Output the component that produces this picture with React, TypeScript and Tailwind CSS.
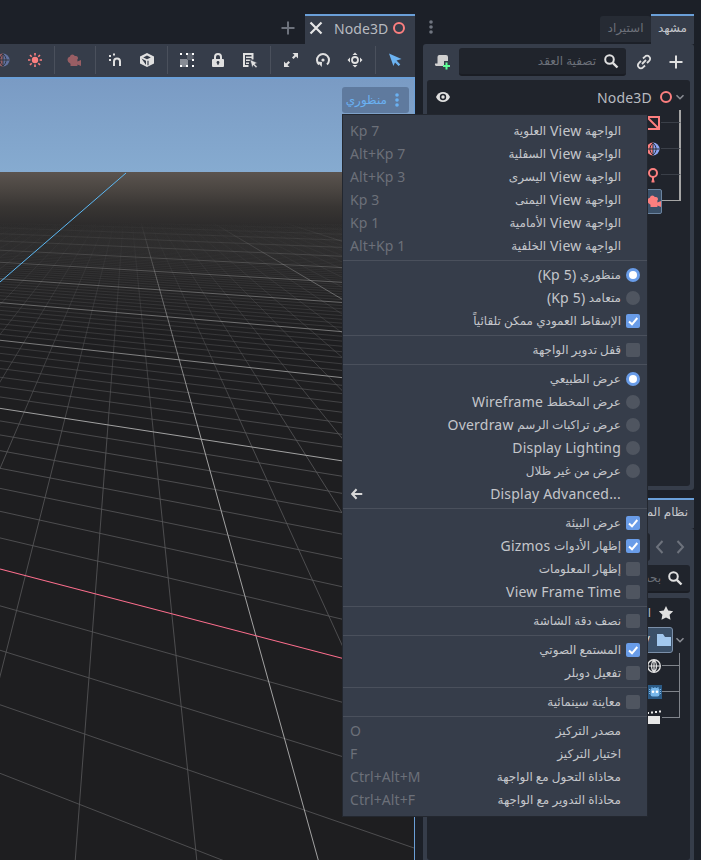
import React from "react";

const FONT = "font-['Noto_Sans','DejaVu_Sans',sans-serif]";

/* ---------- 3D viewport drawing ---------- */
const VPX = 127, HY = 172;
const lines: { x1: number; y1: number; x2: number; y2: number; major: boolean }[] = [];
for (let k = -40; k <= 70; k++) {
  if (k === -8) continue;
  const s = 0.278 + 0.1766 * k;
  lines.push({ x1: VPX, y1: HY, x2: VPX + s * 688, y2: 860, major: k % 8 === 0 });
}
for (let j = 5; j >= -150; j--) {
  if (j === 0) continue;
  const h = 1 / (0.002519 - 0.000214 * j);
  const f = 2040 / 1540;
  lines.push({ x1: -1540, y1: HY, x2: 500, y2: HY + h * f, major: j % 8 === 0 });
}

function Scene() {
  return (
    <svg viewBox="0 79 414 781" className="block h-full w-full">
      <defs>
        <linearGradient id="sky" x1="0" y1="0" x2="0" y2="1">
          <stop offset="0" stopColor="#7a9bc4" />
          <stop offset="1" stopColor="#86abd0" />
        </linearGradient>
        <linearGradient id="ground" gradientUnits="userSpaceOnUse" x1="0" y1="172" x2="0" y2="340">
          <stop offset="0" stopColor="#5b544f" />
          <stop offset="0.107" stopColor="#4a4541" />
          <stop offset="0.21" stopColor="#383533" />
          <stop offset="0.32" stopColor="#2c2b2b" />
          <stop offset="1" stopColor="#1e1e20" />
        </linearGradient>
        <linearGradient id="minor" gradientUnits="userSpaceOnUse" x1="0" y1="222" x2="0" y2="450">
          <stop offset="0" stopColor="#58585a" stopOpacity="0" />
          <stop offset="0.3" stopColor="#58585a" stopOpacity="0.3" />
          <stop offset="1" stopColor="#58585a" stopOpacity="0.8" />
        </linearGradient>
        <linearGradient id="major" gradientUnits="userSpaceOnUse" x1="0" y1="222" x2="0" y2="420">
          <stop offset="0" stopColor="#a8a8a8" stopOpacity="0" />
          <stop offset="0.3" stopColor="#a8a8a8" stopOpacity="0.45" />
          <stop offset="1" stopColor="#a8a8a8" stopOpacity="0.95" />
        </linearGradient>
      </defs>
      <rect x="0" y="79" width="414" height="93" fill="url(#sky)" />
      <rect x="0" y="172" width="414" height="688" fill="url(#ground)" />
      {lines.filter((l) => !l.major).map((l, i) => (
        <line key={i} x1={l.x1} y1={l.y1} x2={l.x2} y2={l.y2} stroke="url(#minor)" strokeWidth="1" />
      ))}
      {lines.filter((l) => l.major).map((l, i) => (
        <line key={i} x1={l.x1} y1={l.y1} x2={l.x2} y2={l.y2} stroke="url(#major)" strokeWidth="1" />
      ))}
      <line x1="126" y1="173" x2="0" y2="282" stroke="#5cb9f5" strokeWidth="1" />
      <line x1="0" y1="569" x2="414" y2="677" stroke="#ff6f8e" strokeWidth="1.1" />
    </svg>
  );
}

/* ---------- icons ---------- */
const I = ({ children, className = "", size = 16 }: { children: React.ReactNode; className?: string; size?: number }) => (
  <svg viewBox="0 0 16 16" width={size} height={size} className={"block shrink-0 " + className}>{children}</svg>
);
const Globe = ({ a = "#fc7f7f", b = "#8da5f3", dim = false }: { a?: string; b?: string; dim?: boolean }) => (
  <I className={dim ? "opacity-50" : ""}>
    <path d="M8 1.5a6.500 6.500 0 0 0 0 13z" fill={a} />
    <path d="M8 1.5a6.500 6.500 0 0 1 0 13z" fill={b} />
    <path d="M8 2v12M2 8h12M8 2c-4 3-4 9 0 12M8 2c4 3 4 9 0 12" fill="none" stroke="#2b303a" strokeWidth="1" />
  </I>
);
const Sun = () => (
  <I>
    <circle cx="8" cy="8" r="3.2" fill="#fc7f7f" />
    <path d="M8 1v2.4M8 12.600V15M1 8h2.4M12.600 8H15M3 3l1.7 1.7M11.300 11.300 13 13M13 3l-1.7 1.7M4.700 11.300 3 13" stroke="#fc7f7f" strokeWidth="1.6" />
  </I>
);
const Camera = ({ c = "#fc7f7f", dim = false }: { c?: string; dim?: boolean }) => (
  <I className={dim ? "opacity-50" : ""}>
    <path d="M6.500 2.500a2.500 2.500 0 0 1 2.300 1.600 2.300 2.300 0 0 1 3.200 2.100c0 .8-.4 1.400-1 1.800h.4v1.500L15 8v6l-3.600-1.500V14H4.500v-2.200A4.500 4.500 0 0 1 1.500 8c0-1.600 1-3 2.400-3.200a2.700 2.700 0 0 1 2.600-2.300z" fill={c} />
  </I>
);
const Magnet = () => (
  <I>
    <path d="M6 14V9.500a3 3 0 0 1 6 0V14" fill="none" stroke="#e0e0e0" strokeWidth="2" />
    <rect x="1" y="3" width="2" height="2" fill="#e0e0e0" />
    <rect x="5" y="1.500" width="2" height="2" fill="#e0e0e0" />
    <rect x="1" y="7" width="2" height="2" fill="#e0e0e0" />
  </I>
);
const Cube = () => (
  <I>
    <path d="M8 1 15 4.500v7L8 15 1 11.500v-7z" fill="#e0e0e0" />
    <path d="M8 3.500 11.800 5.400 8 7.300 4.200 5.400z M2.500 6.500 7 8.700v4.200" fill="#363d4a" />
    <path d="M9 8.700v4.600" stroke="#363d4a" strokeWidth="1.2" />
  </I>
);
const GroupIcon = () => (
  <I>
    <rect x="1" y="7" width="8" height="8" fill="#878c95" />
    <rect x="8" y="1" width="6.500" height="7" fill="#5c626d" />
    <rect x="1" y="1" width="2" height="2" fill="#fff" />
    <rect x="7" y="1" width="2" height="2" fill="#fff" />
    <rect x="13" y="1" width="2" height="2" fill="#fff" />
    <rect x="1" y="13" width="2" height="2" fill="#fff" />
    <rect x="7" y="13" width="2" height="2" fill="#fff" />
    <rect x="13" y="13" width="2" height="2" fill="#fff" />
    <rect x="13" y="7" width="2" height="2" fill="#fff" />
  </I>
);
const Lock = () => (
  <I>
    <path d="M5 7V5a3 3 0 0 1 6 0v2" fill="none" stroke="#e0e0e0" strokeWidth="2" />
    <path d="M3 7h10a1 1 0 0 1 1 1v6a1 1 0 0 1-1 1H3a1 1 0 0 1-1-1V8a1 1 0 0 1 1-1z" fill="#e0e0e0" />
    <circle cx="8" cy="10.500" r="1.400" fill="#363d4a" />
    <rect x="7.400" y="10.500" width="1.200" height="2.400" fill="#363d4a" />
  </I>
);
const ListCursor = () => (
  <I>
    <path d="M1 1h10.500v6.500H9.500V3H3v10h3.500v2H1z" fill="#e0e0e0" />
    <path d="M4 4.500h6.500v1.600H4zM4 7.500h4.500v1.600H4zM4 10.500h3v1.600H4z" fill="#e0e0e0" />
    <path d="M8 7.500 15.500 11l-2.700 1.100 2.500 2.600-1.300 1.200-2.500-2.600-1.200 2.500z" fill="#e0e0e0" stroke="#363d4a" strokeWidth="0.6" />
  </I>
);
const Expand = () => (
  <I>
    <path d="M9.500 1H15v5.500l-2-2L10.500 7 9 5.500 11.500 3zM6.500 15H1V9.500l2 2L5.500 9 7 10.500 4.500 13z" fill="#e0e0e0" />
  </I>
);
const Rotate = () => (
  <I>
    <path d="M4 12.500A6 6 0 1 1 12 12.500" fill="none" stroke="#e0e0e0" strokeWidth="2" />
    <path d="M1.800 9.500 7 10l-.2 5z" fill="#e0e0e0" />
    <circle cx="8" cy="8" r="1.600" fill="#e0e0e0" />
  </I>
);
const Move = () => (
  <I>
    <path d="M8 .5 10.500 3h-5zM8 15.500 5.500 13h5zM.5 8 3 5.500v5zM15.500 8 13 10.500v-5z" fill="#e0e0e0" />
    <circle cx="8" cy="8" r="3" fill="none" stroke="#e0e0e0" strokeWidth="1.800" />
  </I>
);
const Pointer = () => (
  <I>
    <path d="M2 1.500 14.500 7l-5 1.600 3.800 3.800-1.700 1.700-3.600-3.700L6.400 14z" fill="#6cb3f2" />
  </I>
);
const Plus = ({ c = "#e0e0e0" }: { c?: string }) => (
  <I>
    <path d="M8 1.500v13M1.500 8h13" stroke={c} strokeWidth="2" />
  </I>
);
const Close = () => (
  <I>
    <path d="M2.500 2.500l11 11M13.500 2.500l-11 11" stroke="#e6e6e6" strokeWidth="2.200" />
  </I>
);
const Ring = () => (
  <I>
    <circle cx="8" cy="8" r="5" fill="none" stroke="#fc7f7f" strokeWidth="2" />
  </I>
);
const Dots = ({ c = "#707580" }: { c?: string }) => (
  <I>
    <circle cx="8" cy="3" r="1.800" fill={c} />
    <circle cx="8" cy="8" r="1.800" fill={c} />
    <circle cx="8" cy="13" r="1.800" fill={c} />
  </I>
);
const Search = () => (
  <I>
    <circle cx="6.500" cy="6.500" r="4.300" fill="none" stroke="#e0e0e0" strokeWidth="2" />
    <path d="M9.800 9.800 14.500 14.500" stroke="#e0e0e0" strokeWidth="2.400" />
  </I>
);
const LinkIcon = () => (
  <I>
    <path d="M7 4.500 9 2.600a2.800 2.800 0 0 1 4.200 0 2.800 2.800 0 0 1 0 4.200L11 9M9 11.500 7 13.400a2.800 2.800 0 0 1-4.200 0 2.800 2.800 0 0 1 0-4.200L5 7M6 10l4-4" fill="none" stroke="#e0e0e0" strokeWidth="1.800" />
  </I>
);
const ScriptAdd = () => (
  <I>
    <path d="M5 1h7a2 2 0 0 1 2 2v4H10v5H2a2 2 0 0 1-1-2.500h2.500V3A2 2 0 0 1 5 1z" fill="#d0d0d0" />
    <path d="M12.500 8.500v7M9 12h7" stroke="#5fff97" strokeWidth="2" />
  </I>
);
const Eye = () => (
  <I>
    <path d="M1 8c1.500-3.200 4-5 7-5s5.500 1.800 7 5c-1.500 3.200-4 5-7 5s-5.500-1.800-7-5z" fill="#e0e0e0" />
    <circle cx="8" cy="8" r="3.200" fill="#20242c" />
    <circle cx="8" cy="8" r="1.700" fill="#e0e0e0" />
  </I>
);
const Chevron = () => (
  <svg viewBox="0 0 10 10" width="10" height="10" className="block shrink-0">
    <path d="M1.500 3.200 5 6.700l3.500-3.500" fill="none" stroke="#8a8d94" strokeWidth="1.600" />
  </svg>
);
const Collision = () => (
  <I>
    <rect x="2" y="2" width="12" height="12" fill="none" stroke="#fc7f7f" strokeWidth="2" />
    <path d="M2 2l12 12" stroke="#fc7f7f" strokeWidth="2" />
  </I>
);
const Pin = () => (
  <I>
    <circle cx="8" cy="6" r="4" fill="none" stroke="#fc7f7f" strokeWidth="2" />
    <path d="M8 10v4M6.500 14.500h3" stroke="#fc7f7f" strokeWidth="2" />
  </I>
);
const Star = () => (
  <I>
    <path d="M8 1l2.200 4.600 5 .7-3.600 3.500.9 5L8 12.400l-4.500 2.400.9-5L.8 6.300l5-.7z" fill="#e0e0e0" />
  </I>
);
const Folder = () => (
  <I>
    <path d="M1 2h6l2 3h6v9H1z" fill="#a2c8ee" />
  </I>
);
const WhiteGlobe = () => (
  <I>
    <circle cx="8" cy="8" r="6.300" fill="none" stroke="#e0e0e0" strokeWidth="1.400" />
    <path d="M8 2v12M2 8h12M8 2c-3.500 3-3.500 9 0 12M8 2c3.500 3 3.500 9 0 12" fill="none" stroke="#e0e0e0" strokeWidth="1.200" />
  </I>
);
const GodotIcon = () => (
  <svg viewBox="0 0 14 14" width="14" height="14" className="block shrink-0">
    <rect width="14" height="14" fill="#2b5a85" />
    <rect x="2.500" y="3" width="9" height="8.500" rx="2" fill="#78b8ec" />
    <circle cx="5" cy="6.800" r="1.300" fill="#fff" />
    <circle cx="9" cy="6.800" r="1.300" fill="#fff" />
    <path d="M1.500 4v6M12.500 4v6M4 2v1M7 2v1M10 2v1" stroke="#78b8ec" strokeDasharray="1 1" />
  </svg>
);
const Clapper = () => (
  <I>
    <rect x="1" y="6" width="13" height="8" fill="#e6e6e6" />
    <path d="M1 3h2M5 2.500h2M9 2h2M13 1.500h2" stroke="#e6e6e6" strokeWidth="2" />
  </I>
);
const ChevSide = ({ dir }: { dir: "l" | "r" }) => (
  <I>
    <path d={dir === "l" ? "M10.500 2 5 8l5.500 6" : "M5.500 2 11 8l-5.500 6"} fill="none" stroke="#6d727c" strokeWidth="2" />
  </I>
);
const BackArrow = () => (
  <I size={14}>
    <path d="M7.500 2.500 2.500 8l5 5.500M3 8h11" fill="none" stroke="#d8d8d8" strokeWidth="2.400" />
  </I>
);

/* ---------- text: Arabic runs are set smaller, as their fallback face is wide ---------- */
const AR = /([\u0600-\u06FF]+(?:\s+[\u0600-\u06FF]+)*)/;
function Mixed({ text }: { text: string }) {
  const parts = text.split(AR).filter(Boolean);
  return (
    <span dir={AR.test(text) ? "rtl" : "ltr"} className="whitespace-nowrap">
      {parts.map((p, i) =>
        AR.test(p) ? (
          <span key={i} className="relative top-[-1px] text-[12px]">{p}</span>
        ) : (
          <span key={i} className="text-[14px] tracking-[0.2px]">{p}</span>
        )
      )}
    </span>
  );
}

/* ---------- menu ---------- */
type Row =
  | { t: "sep" }
  | { t: "item"; label: string; short?: string; mark?: "on" | "off" | "ron" | "roff" | "sub" };

const rows: Row[] = [
  { t: "item", label: "الواجهة View العلوية", short: "Kp 7" },
  { t: "item", label: "الواجهة View السفلية", short: "Alt+Kp 7" },
  { t: "item", label: "الواجهة View اليسرى", short: "Alt+Kp 3" },
  { t: "item", label: "الواجهة View اليمنى", short: "Kp 3" },
  { t: "item", label: "الواجهة View الأمامية", short: "Kp 1" },
  { t: "item", label: "الواجهة View الخلفية", short: "Alt+Kp 1" },
  { t: "sep" },
  { t: "item", label: "منظوري (Kp 5)", mark: "ron" },
  { t: "item", label: "متعامد (Kp 5)", mark: "roff" },
  { t: "item", label: "الإسقاط العمودي ممكن تلقائياً", mark: "on" },
  { t: "sep" },
  { t: "item", label: "قفل تدوير الواجهة", mark: "off" },
  { t: "sep" },
  { t: "item", label: "عرض الطبيعي", mark: "ron" },
  { t: "item", label: "عرض المخطط Wireframe", mark: "roff" },
  { t: "item", label: "عرض تراكبات الرسم Overdraw", mark: "roff" },
  { t: "item", label: "Display Lighting", mark: "roff" },
  { t: "item", label: "عرض من غير ظلال", mark: "roff" },
  { t: "item", label: "Display Advanced...", mark: "sub" },
  { t: "sep" },
  { t: "item", label: "عرض البيئة", mark: "on" },
  { t: "item", label: "إظهار الأدوات Gizmos", mark: "on" },
  { t: "item", label: "إظهار المعلومات", mark: "off" },
  { t: "item", label: "View Frame Time", mark: "off" },
  { t: "sep" },
  { t: "item", label: "نصف دقة الشاشة", mark: "off" },
  { t: "sep" },
  { t: "item", label: "المستمع الصوتي", mark: "on" },
  { t: "item", label: "تفعيل دوبلر", mark: "off" },
  { t: "sep" },
  { t: "item", label: "معاينة سينمائية", mark: "off" },
  { t: "sep" },
  { t: "item", label: "مصدر التركيز", short: "O" },
  { t: "item", label: "اختيار التركيز", short: "F" },
  { t: "item", label: "محاذاة التحول مع الواجهة", short: "Ctrl+Alt+M" },
  { t: "item", label: "محاذاة التدوير مع الواجهة", short: "Ctrl+Alt+F" },
];

function Mark({ m }: { m?: string }) {
  if (m === "on")
    return (
      <div className="flex h-[14px] w-[14px] items-center justify-center rounded-[2px] bg-[#699ce8]">
        <svg viewBox="0 0 12 12" width="12" height="12"><path d="M2 6.500 5 9.300 10.300 3" fill="none" stroke="#fff" strokeWidth="2" /></svg>
      </div>
    );
  if (m === "off") return <div className="h-[14px] w-[14px] rounded-[2px] bg-[#4f5560]" />;
  if (m === "ron")
    return (
      <div className="flex h-[14px] w-[14px] items-center justify-center rounded-full bg-[#699ce8]">
        <div className="h-[8px] w-[8px] rounded-full bg-white" />
      </div>
    );
  if (m === "roff") return <div className="h-[14px] w-[14px] rounded-full bg-[#4f5560]" />;
  return null;
}

function Menu() {
  return (
    <div className="absolute left-[342px] top-[114px] w-[306px] border border-[#23272f] bg-[#363d4a] py-[4.500px]">
      {rows.map((r, i) =>
        r.t === "sep" ? (
          <div key={i} className="flex h-[6px] items-center"><div className="h-px w-full bg-[#4a505c]" /></div>
        ) : (
          <div key={i} className="flex h-[23px] items-center pl-[7px] pr-[7px]">
            {r.mark === "sub" ? <BackArrow /> : r.short ? <span className="mb-[2px] text-[14px] tracking-[0.1px] text-[#6c7079]">{r.short}</span> : null}
            <div className="mb-[2px] ml-auto mr-[5px] text-[#c4c6ca]"><Mixed text={r.label} /></div>
            <div className="flex w-[14px] justify-center">
              <Mark m={r.mark} />
            </div>
          </div>
        )
      )}
    </div>
  );
}

/* ---------- layout pieces ---------- */
const Btn = ({ children, className = "w-8" }: { children: React.ReactNode; className?: string }) => (
  <div className={"flex h-full shrink-0 items-center justify-center " + className}>{children}</div>
);
const Sep = ({ className }: { className: string }) => (
  <div className={"flex h-full shrink-0 items-center justify-center " + className}>
    <div className="h-[28px] w-px bg-[#4a505c]" />
  </div>
);

function Toolbar() {
  return (
    <div className="flex h-[34px] justify-end overflow-hidden bg-[#363d4a] pb-[2px] pr-[4px]">
      <Btn><Globe dim /></Btn>
      <Btn><Sun /></Btn>
      <Sep className="w-[7px]" />
      <Btn><Camera dim /></Btn>
      <Sep className="w-[10px]" />
      <Btn className="w-[31px]"><Magnet /></Btn>
      <Btn><Cube /></Btn>
      <Sep className="w-[8px]" />
      <Btn className="w-[31px]"><GroupIcon /></Btn>
      <Btn className="w-[32px]"><Lock /></Btn>
      <Btn><ListCursor /></Btn>
      <Sep className="w-[9px]" />
      <Btn><Expand /></Btn>
      <Btn><Rotate /></Btn>
      <Btn><Move /></Btn>
      <Sep className="w-[8px]" />
      <Btn><Pointer /></Btn>
    </div>
  );
}

function Branch({ last, bright, w }: { last?: boolean; bright?: boolean; w: string }) {
  return (
    <div className={"flex h-full flex-col " + w}>
      <div className={"h-1/2 border-b border-r-2 border-r-[#a5a5a5] " + (bright ? "border-b-[#a5a5a5]" : "border-b-[#3a3f48]")} />
      <div className={"h-1/2 border-r-2 " + (last ? "border-r-transparent" : "border-r-[#a5a5a5]")} />
    </div>
  );
}
function Branch2({ last }: { last?: boolean }) {
  return (
    <div className="flex h-full w-[18px] flex-col">
      <div className="h-1/2 border-b border-r border-[#80848b]" />
      <div className={"h-1/2 border-r " + (last ? "border-transparent" : "border-[#80848b]")} />
    </div>
  );
}

function SceneDock() {
  return (
    <div className="flex h-[446px] flex-col rounded-[3px] bg-[#363d4a] p-[4px] pt-0">
      <div className="flex h-[36px] items-center">
        <div className="flex w-[30px] justify-center"><ScriptAdd /></div>
        <div className="ml-[2px] flex h-[28px] w-[167px] items-center justify-end rounded-[3px] border-b-2 border-[#1a1d24] bg-[#20242c] pr-[7px]">
          <span dir="rtl" className="text-[12px] text-[#6c7079]">تصفية العقد</span>
          <div className="ml-[7px]"><Search /></div>
        </div>
        <div className="ml-[10px] flex w-[16px]"><LinkIcon /></div>
        <div className="ml-[16px]"><Plus /></div>
      </div>
      <div className="flex-1 rounded-[3px] bg-[#20242c]">
        <div className="flex h-[30px] items-center pl-[8px] pr-[5px] pt-[4px]">
          <Eye />
          <span className="ml-auto text-[14px] tracking-[0.2px] text-[#b8bbc0]">Node3D</span>
          <div className="ml-[6px]"><Ring /></div>
          <div className="ml-[1px]"><Chevron /></div>
        </div>
        <div className="flex h-[26px] items-center justify-end pr-[9px]"><Collision /><Branch w="w-[20px]" /></div>
        <div className="flex h-[26px] items-center justify-end pr-[9px]"><Globe /><Branch w="w-[20px]" /></div>
        <div className="flex h-[26px] items-center justify-end pr-[9px]"><Pin /><Branch w="w-[20px]" /></div>
        <div className="flex h-[26px] items-center justify-end pr-[9px]">
          <div className="flex h-[25px] w-[16px] items-center justify-center rounded-[2px] border border-[#6b84a0] bg-[#3b5068]"><Camera /></div>
          <Branch last bright w="w-[19px]" />
        </div>
      </div>
    </div>
  );
}

function FileDock() {
  return (
    <div className="flex flex-1 flex-col overflow-hidden rounded-t-[3px] bg-[#363d4a] px-[4px]">
      <div className="flex h-[37px] items-center justify-end">
        <div className="mr-[2px] h-[28px] w-[40px] rounded-[3px] bg-[#20242c]" />
        <ChevSide dir="l" />
        <div className="ml-[4px] mr-[2px]"><ChevSide dir="r" /></div>
      </div>
      <div className="flex h-[28px] items-center justify-end rounded-[3px] border-b-2 border-[#1a1d24] bg-[#20242c] pr-[7px]">
        <span dir="rtl" className="text-[12px] text-[#6c7079]">بحث في الملفات</span>
        <div className="ml-[6px]"><Search /></div>
      </div>
      <div className="mt-[5px] flex-1 rounded-[3px] bg-[#20242c]">
        <div className="flex h-[29px] items-center justify-end pr-[16px]">
          <span dir="rtl" className="mr-[7px] text-[12px] text-[#b8bbc0]">المفضلة</span>
          <Star />
        </div>
        <div className="flex h-[26px] items-center justify-end pr-[5px]">
          <div className="flex h-[26px] items-center rounded-[3px] border border-[#7b8fa8] bg-[#3b5068] pl-[2px]">
            <span className="mr-[6px] text-[14px] text-[#e0e0e0]">res://</span>
            <Folder />
          </div>
          <div className="ml-[2px]"><Chevron /></div>
        </div>
        <div className="flex h-[26px] items-center justify-end pr-[10px]"><WhiteGlobe /><Branch2 /></div>
        <div className="flex h-[26px] items-center justify-end pr-[10px]"><GodotIcon /><Branch2 /></div>
        <div className="flex h-[26px] items-center justify-end pr-[10px]"><Clapper /><Branch2 last /></div>
      </div>
    </div>
  );
}

export default function App() {
  return (
    <div className={"relative flex h-[860px] w-[701px] overflow-hidden bg-[#1c2028] " + FONT}>
      {/* left: main editor */}
      <div className="flex w-[415px] shrink-0 flex-col pt-[14px]">
        <div className="flex h-[30px] items-end justify-end">
          <div className="mb-[8px] mr-[9px]"><Plus c="#6d727c" /></div>
          <div className="flex h-[30px] w-[110px] items-center border-t-2 border-[#6a9fd8] bg-[#363d4a] pb-[4px] pl-[2px]">
            <div className="ml-[1px]"><Close /></div>
            <span className="ml-[10px] text-[14px] tracking-[0.1px] text-[#b8bbc0]">Node3D</span>
            <div className="ml-[3px]"><Ring /></div>
          </div>
        </div>
        <Toolbar />
        <div className="relative flex-1 border-r border-t-2 border-[#6a9fd8]">
          <Scene />
          <div className="absolute left-[342px] top-[8px] flex h-[26px] w-[67px] items-center justify-end rounded-[3px] bg-[#5f7a9e] pr-[4px]">
            <span dir="rtl" className="text-[12px] text-[#6ab1f2]">منظوري</span>
            <div className="ml-[2px]"><Dots c="#6ab1f2" /></div>
          </div>
        </div>
      </div>
      {/* right: docks */}
      <div className="ml-[8px] flex w-[271px] shrink-0 flex-col pt-[14px]">
        <div className="flex h-[30px] items-end">
          <div className="mb-[9px]"><Dots /></div>
          <div className="ml-[161px] flex h-[26px] w-[51px] items-center justify-center self-center rounded-t-[3px] bg-[#262b34] pb-[3px] text-[12px] text-[#6c7079]">
            <span dir="rtl">استيراد</span>
          </div>
          <div className="flex h-[30px] w-[43px] items-center justify-center border-t-2 border-[#6a9fd8] bg-[#363d4a] pb-[4px] text-[12px] text-[#c4c6ca]">
            <span dir="rtl">مشهد</span>
          </div>
        </div>
        <SceneDock />
        <div className="h-[8px]" />
        <div className="flex h-[30px] justify-end">
          <div className="flex h-[30px] w-[100px] items-center justify-end border-t-2 border-[#6a9fd8] bg-[#363d4a] pb-[4px] pr-[6px] text-[12px] text-[#c4c6ca]">
            <span dir="rtl">نظام الملفات</span>
          </div>
        </div>
        <FileDock />
      </div>
      <Menu />
    </div>
  );
}
